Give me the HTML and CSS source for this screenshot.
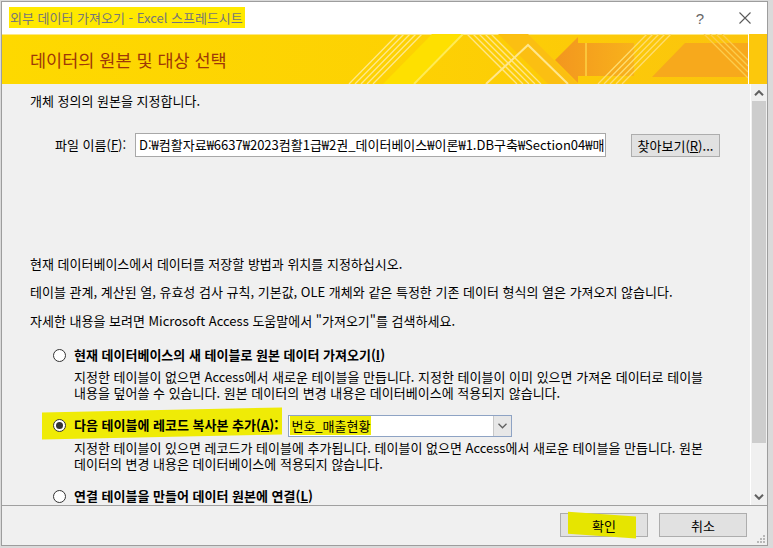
FILE: index.html
```html
<!DOCTYPE html>
<html lang="ko">
<head>
<meta charset="utf-8">
<title>외부 데이터 가져오기</title>
<link rel="stylesheet" href="styles.css">
</head>
<body>
<div class="window">
  <div class="titlebar">
    <span class="title"><span class="marker">외부 데이터 가져오기 - Excel 스프레드시트</span></span>
    <span class="help">?</span>
    <span class="close"><svg width="12" height="12" viewBox="0 0 12 12"><path d="M0.5 0.5 L11.5 11.5 M11.5 0.5 L0.5 11.5" stroke="#5a5a5a" stroke-width="1.1" fill="none"/></svg></span>
  </div>
  <div class="banner">
    <div class="banner-art">
      <svg class="art" width="746" height="50" viewBox="2 34 746 50" preserveAspectRatio="none">
        <defs>
          <linearGradient id="bg" x1="0" x2="1" y1="0" y2="0">
            <stop offset="0" stop-color="#fed900"/>
            <stop offset="0.55" stop-color="#fdd103"/>
            <stop offset="1" stop-color="#fbc40d"/>
          </linearGradient>
          <linearGradient id="org" x1="0" x2="1" y1="0" y2="0">
            <stop offset="0" stop-color="#f3961f"/>
            <stop offset="1" stop-color="#f8b21b"/>
          </linearGradient>
        </defs>
        <rect x="2" y="34" width="746" height="50" fill="url(#bg)"/>
        <rect x="2" y="34" width="746" height="1" fill="#fde884"/>
        <polygon points="383,84 413,84 462,34 432,34" fill="#fee000"/>
        <g stroke="#ffe98c" stroke-width="1.3" fill="none">
          <line x1="349" y1="84" x2="398" y2="34"/>
          <line x1="355" y1="84" x2="404" y2="34"/>
          <line x1="361" y1="84" x2="410" y2="34"/>
          <line x1="367" y1="84" x2="416" y2="34"/>
          <line x1="373" y1="84" x2="422" y2="34"/>
        </g>
        <line x1="414" y1="84" x2="463" y2="34" stroke="#ffeb55" stroke-width="2"/>
        <polygon points="498,34 528,34 578,84 548,84" fill="#fbbf12"/>
        <g stroke="#ffe68a" stroke-width="1.3" fill="none">
          <line x1="467" y1="34" x2="517" y2="84"/>
          <line x1="473" y1="34" x2="523" y2="84"/>
          <line x1="479" y1="34" x2="529" y2="84"/>
          <line x1="485" y1="34" x2="535" y2="84"/>
          <line x1="491" y1="34" x2="541" y2="84"/>
        </g>
        <polyline points="486,84 528,45 568,84" fill="none" stroke="#ffe68c" stroke-width="2"/>
        <polygon points="555,60 578,37 578,43 634,43 634,76 578,76 578,83" fill="url(#org)"/>
        <line x1="586" y1="43" x2="586" y2="76" stroke="#fbc63a" stroke-width="2"/>
        <g stroke="#ffdd70" stroke-width="1.3" fill="none">
          <line x1="598" y1="84" x2="647" y2="34"/>
          <line x1="604" y1="84" x2="653" y2="34"/>
          <line x1="610" y1="84" x2="659" y2="34"/>
          <line x1="616" y1="84" x2="665" y2="34"/>
          <line x1="622" y1="84" x2="671" y2="34"/>
        </g>
        <polygon points="652,77 685,43 748,43 748,77" fill="#f7a91c"/>
        <g stroke="#fccc4c" stroke-width="1.3" fill="none">
          <line x1="704" y1="34" x2="748" y2="78"/>
          <line x1="710" y1="34" x2="748" y2="72"/>
          <line x1="716" y1="34" x2="748" y2="66"/>
          <line x1="722" y1="34" x2="748" y2="60"/>
        </g>
      </svg>
      <h1>데이터의 원본 및 대상 선택</h1>
    </div>
    <div class="banner-fill"></div>
  </div>
  <div class="main">
    <div class="content">
      <p class="line l1">개체 정의의 원본을 지정합니다.</p>
      <div class="file-row">
        <span class="file-label">파일 이름(<u>F</u>):</span>
        <div class="input">D:₩컴활자료₩6637₩2023컴활1급₩2권_데이터베이스₩이론₩1.DB구축₩Section04₩매</div>
        <button class="btn browse">찾아보기(<u>R</u>)...</button>
      </div>
      <p class="line l2">현재 데이터베이스에서 데이터를 저장할 방법과 위치를 지정하십시오.</p>
      <p class="line l3">테이블 관계, 계산된 열, 유효성 검사 규칙, 기본값, OLE 개체와 같은 특정한 기존 데이터 형식의 열은 가져오지 않습니다.</p>
      <p class="line l4">자세한 내용을 보려면 Microsoft Access 도움말에서 "가져오기"를 검색하세요.</p>
      <div class="option o1">
        <span class="radio"></span><span class="opt-label">현재 데이터베이스의 새 테이블로 원본 데이터 가져오기(<u>I</u>)</span>
      </div>
      <p class="desc d1">지정한 테이블이 없으면 Access에서 새로운 테이블을 만듭니다. 지정한 테이블이 이미 있으면 가져온 데이터로 테이블<br>내용을 덮어쓸 수 있습니다. 원본 데이터의 변경 내용은 데이터베이스에 적용되지 않습니다.</p>
      <div class="option o2">
        <span class="hl-wrap"><span class="radio checked"></span><span class="opt-label">다음 테이블에 레코드 복사본 추가(<u>A</u>):</span></span>
        <div class="combo">
          <span class="combo-text"><span class="marker2">번호_매출현황</span></span>
          <span class="combo-btn"><svg width="9" height="6" viewBox="0 0 9 6"><path d="M0.5 0.8 L4.5 4.8 L8.5 0.8" stroke="#606060" stroke-width="1.3" fill="none"/></svg></span>
        </div>
      </div>
      <p class="desc d2">지정한 테이블이 있으면 레코드가 테이블에 추가됩니다. 테이블이 없으면 Access에서 새로운 테이블을 만듭니다. 원본<br>데이터의 변경 내용은 데이터베이스에 적용되지 않습니다.</p>
      <div class="option o3">
        <span class="radio"></span><span class="opt-label">연결 테이블을 만들어 데이터 원본에 연결(<u>L</u>)</span>
      </div>
    </div>
    <div class="scrollbar">
      <div class="sb-btn"><svg width="10" height="6" viewBox="0 0 10 6"><path d="M1 5.2 L5 1.2 L9 5.2" stroke="#606060" stroke-width="2" fill="none"/></svg></div>
      <div class="sb-track"><div class="sb-thumb"></div></div>
      <div class="sb-btn"><svg width="10" height="6" viewBox="0 0 10 6"><path d="M1 0.8 L5 4.8 L9 0.8" stroke="#606060" stroke-width="2" fill="none"/></svg></div>
    </div>
  </div>
  <div class="footer">
    <button class="btn ok"><span class="ok-text">확인</span></button>
    <button class="btn cancel">취소</button>
    <span class="grip"><svg width="9" height="9" viewBox="0 0 9 9" fill="#b8b8b8"><rect x="6" y="0" width="2" height="2"/><rect x="3" y="3" width="2" height="2"/><rect x="6" y="3" width="2" height="2"/><rect x="0" y="6" width="2" height="2"/><rect x="3" y="6" width="2" height="2"/><rect x="6" y="6" width="2" height="2"/></svg></span>
  </div>
</div>
</body>
</html>
```
FILE: styles.css
```css
* { box-sizing: border-box; }
html, body { margin: 0; padding: 0; }
body {
  background: #dadada;
  width: 773px;
  height: 548px;
  overflow: hidden;
  font-family: "Noto Sans CJK KR", "Noto Sans", sans-serif;
  font-size: 13px;
  color: #000;
}
.window {
  margin: 1px 0 0 1px;
  width: 767px;
  height: 545px;
  border: 1px solid #9d9d9d;
  background: #f0f0f0;
  display: flex;
  flex-direction: column;
}
.titlebar {
  height: 32px;
  flex: none;
  background: #fff;
  display: flex;
  align-items: center;
  padding-left: 7px;
}
.title { font-size: 13px; color: #777; line-height: 20px; }
.marker { background: #ffe900; padding: 1px 2px 1px 1px; }
.help {
  margin-left: auto;
  width: 20px;
  text-align: center;
  color: #666;
  font-family: "Liberation Sans", sans-serif;
  font-size: 15px;
}
.close { display: flex; margin: 0 16px 0 29px; }
.banner {
  height: 50px;
  flex: none;
  display: flex;
}
.banner-art {
  position: relative;
  width: 746px;
  height: 50px;
  overflow: hidden;
  display: flex;
  align-items: center;
}
.art { position: absolute; left: 0; top: 0; }
.banner h1 {
  position: relative;
  margin: 0;
  padding-left: 28px;
  font-size: 17.5px;
  font-weight: normal;
  color: #9e3808;
}
.banner-fill {
  flex: 1;
  border-left: 1px solid #fff;
  background: #fcc80c;
}
.main {
  height: 421px;
  flex: none;
  display: flex;
}
.content {
  flex: 1;
  padding-left: 28px;
  overflow: hidden;
  line-height: 16px;
}
.line { margin: 0; white-space: nowrap; }
.l1 { margin-top: 9px; }
.l2 { margin-top: 99px; }
.l3 { margin-top: 12px; }
.l4 { margin-top: 13px; }
.file-row {
  margin-top: 24px;
  height: 24px;
  display: flex;
  align-items: center;
  padding-left: 25px;
}
.file-label { width: 80px; }
.input {
  width: 471px;
  height: 24px;
  border: 1px solid #a8a8a8;
  background: #fff;
  padding: 3px 3px 0;
  white-space: nowrap;
  overflow: hidden;
}
.btn {
  font-family: inherit;
  font-size: 13px;
  color: #000;
  background: #e1e1e1;
  border: 1px solid #adadad;
  padding: 0;
  margin: 0;
}
.browse { width: 89px; height: 23px; margin-left: 25px; }
.option {
  display: flex;
  align-items: center;
  padding-left: 23px;
  font-weight: bold;
  white-space: nowrap;
}
.radio {
  width: 13px;
  height: 13px;
  border: 1px solid #333;
  border-radius: 50%;
  background: #fff;
  flex: none;
  margin-right: 8px;
  display: flex;
  align-items: center;
  justify-content: center;
}
.radio.checked::after {
  content: "";
  width: 7px;
  height: 7px;
  border-radius: 50%;
  background: #333;
}
.o1 { margin-top: 18px; height: 16px; }
.desc { margin: 0; padding-left: 44px; white-space: nowrap; }
.d1 { margin-top: 6px; }
.o2 { margin-top: 14px; height: 22px; }
.hl-wrap {
  position: relative;
  display: flex;
  align-items: center;
  margin-top: -2px;
}
.hl-wrap::before {
  content: "";
  position: absolute;
  left: -11px;
  right: -4px;
  top: -7px;
  bottom: -4px;
  background: #efeb06;
  transform: skewY(-1.2deg);
}
.hl-wrap > * { position: relative; }
.combo {
  margin-left: 10px;
  width: 224px;
  height: 22px;
  border: 1px solid #8ea3c4;
  background: #fff;
  display: flex;
  font-weight: normal;
}
.combo-text { flex: 1; padding: 2px 0 0 1px; }
.marker2 { background: #efeb06; padding: 0 1px; }
.combo-btn {
  width: 18px;
  background: #e7e7e7;
  border-left: 1px solid #c8c8c8;
  display: flex;
  align-items: center;
  justify-content: center;
}
.d2 { margin-top: 3px; }
.o3 { margin-top: 16px; height: 16px; }
.scrollbar {
  width: 17px;
  border-left: 1px solid #fff;
  display: flex;
  flex-direction: column;
  background: #f0f0f0;
}
.sb-btn {
  height: 17px;
  display: flex;
  align-items: center;
  justify-content: center;
}
.sb-track { flex: 1; padding: 0 1px; display: flex; flex-direction: column; }
.sb-thumb { height: 342px; background: #cdcdcd; }
.footer {
  flex: 1;
  border-top: 1px solid #a0a0a0;
  display: flex;
  align-items: flex-start;
  justify-content: flex-end;
  padding: 7px 20px 0 0;
  position: relative;
}
.footer .btn { width: 88px; height: 24px; }
.cancel { margin-left: 11px; }
.ok-text {
  position: relative;
  display: inline-block;
}
.ok-text::before {
  content: "";
  position: absolute;
  left: -24px;
  right: -20px;
  top: -2px;
  bottom: -1px;
  background: #e6e500;
  transform: skewY(4deg);
  z-index: -1;
}
.ok { position: relative; z-index: 0; }
.grip { position: absolute; right: 1px; bottom: 1px; display: flex; }
```
